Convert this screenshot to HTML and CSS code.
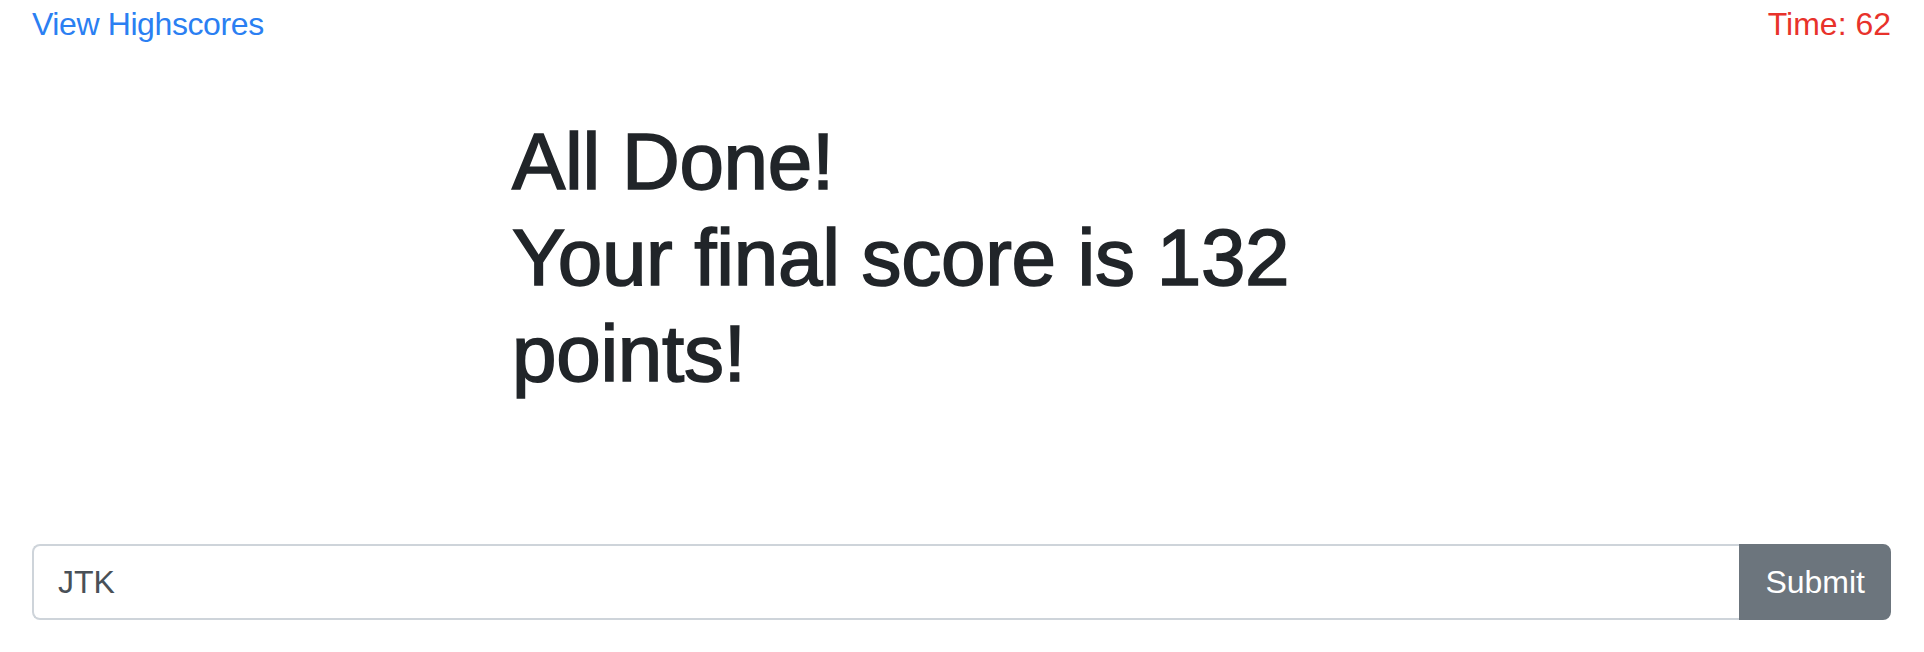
FILE: index.html
```html
<!DOCTYPE html>
<html lang="en">
<head>
<meta charset="utf-8">
<title>Quiz</title>
<link rel="stylesheet" href="styles.css">
</head>
<body>
<header class="topbar">
  <a class="highscores" href="#">View Highscores</a>
  <span class="timer">Time: 62</span>
</header>
<main class="content">
  <section class="result">
    <h1 class="result-title">All Done!<br>Your final score is 132 points!</h1>
  </section>
  <form class="score-form" onsubmit="return false;">
    <input class="initials" type="text" value="JTK">
    <button class="submit" type="submit">Submit</button>
  </form>
</main>
</body>
</html>
```

FILE: styles.css
```css
html, body {
  margin: 0;
  padding: 0;
  background: #ffffff;
}

body {
  font-family: "Liberation Sans", Arial, Helvetica, sans-serif;
  font-size: 32px;
  line-height: 1.5;
  color: #212529;
}

.topbar {
  display: flex;
  justify-content: space-between;
  align-items: flex-start;
  padding: 0 33px 0 32px;
  height: 48px;
}

.highscores {
  color: #2b7ff2;
  text-decoration: none;
  letter-spacing: -0.4px;
}

.timer {
  color: #e8322b;
}

.content {
  display: flex;
  flex-direction: column;
}

.result {
  padding-left: 512px;
  margin-top: 66px;
}

.result-title {
  margin: 0;
  max-width: 900px;
  font-size: 80px;
  font-weight: 500;
  line-height: 1.2;
  letter-spacing: -0.3px;
  color: #212529;
  -webkit-text-stroke: 1.6px #212529;
}

.score-form {
  display: flex;
  margin: 142px 33px 0 32px;
  height: 76px;
}

.initials {
  flex: 1;
  min-width: 0;
  box-sizing: border-box;
  height: 76px;
  margin: 0;
  padding: 12px 24px;
  font-family: inherit;
  font-size: 32px;
  line-height: 1.5;
  color: #495057;
  background: #ffffff;
  border: 2px solid #ced4da;
  border-right: none;
  border-radius: 8px 0 0 8px;
  outline: none;
}

.submit {
  box-sizing: border-box;
  height: 76px;
  margin: 0;
  padding: 12px 24px;
  font-family: inherit;
  font-size: 32px;
  line-height: 1.5;
  color: #ffffff;
  background: #6c757d;
  border: 2px solid #6c757d;
  border-radius: 0 8px 8px 0;
  cursor: pointer;
}
```
